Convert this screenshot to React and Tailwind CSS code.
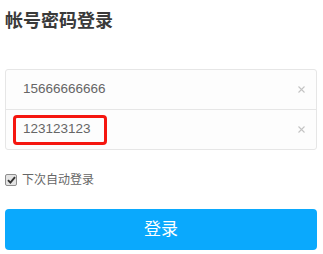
import { useState } from 'react'

const font = { fontFamily: '"Liberation Sans", "Noto Sans CJK SC", sans-serif' }

function ClearIcon() {
  return (
    <svg width="7" height="7" viewBox="0 0 7 7" className="text-[#c4c4c4]">
      <path d="M0.5 0.5 L6.5 6.5 M6.5 0.5 L0.5 6.5" stroke="currentColor" strokeWidth="1.1" />
    </svg>
  )
}

export default function App() {
  const [phone, setPhone] = useState('15666666666')
  const [pwd, setPwd] = useState('123123123')
  const [remember, setRemember] = useState(true)

  return (
    <div className="w-[323px] h-[254px] bg-white px-[5px] pt-[9px]" style={font}>
      {/* title */}
      <h1 className="text-[18px] leading-[24px] font-bold text-[#3a3a3a]">帐号密码登录</h1>

      {/* inputs */}
      <div className="mt-[36px] w-[312px] border border-[#e6e6e6] rounded-[3px] bg-[#fdfdfd]">
        <div className="h-[40px] flex items-center pl-[17px] pr-[11px] border-b border-[#e6e6e6]">
          <input
            value={phone}
            onChange={(e) => setPhone(e.target.value)}
            className="flex-1 bg-transparent outline-none text-[13.5px] text-[#666]"
          />
          <ClearIcon />
        </div>
        <div className="h-[39px] flex items-center pl-[7px] pr-[11px]">
          <div className="w-[94px] h-[30px] border-[3px] border-[#f5160f] rounded-[4px] flex items-center pl-[7px]">
            <input
              value={pwd}
              onChange={(e) => setPwd(e.target.value)}
              className="w-full bg-transparent outline-none text-[13.5px] text-[#666]"
            />
          </div>
          <div className="flex-1" />
          <ClearIcon />
        </div>
      </div>

      {/* remember */}
      <label className="mt-[21px] flex items-center gap-[5px] text-[12px] text-[#666] cursor-pointer">
        <span
          onClick={() => setRemember(!remember)}
          className="w-[12px] h-[12px] border border-[#8e8e8e] rounded-[2px] bg-[#e4e4e4] flex items-center justify-center"
        >
          {remember && (
            <svg width="9" height="8" viewBox="0 0 9 8">
              <path d="M1 4.2 L3.4 6.6 L8 1.2" stroke="#333" strokeWidth="1.9" fill="none" />
            </svg>
          )}
        </span>
        下次自动登录
      </label>

      {/* submit */}
      <button className="mt-[20px] w-[312px] h-[41px] rounded-[4px] bg-[#0aa9fd] text-white text-[17px]">
        登录
      </button>
    </div>
  )
}
